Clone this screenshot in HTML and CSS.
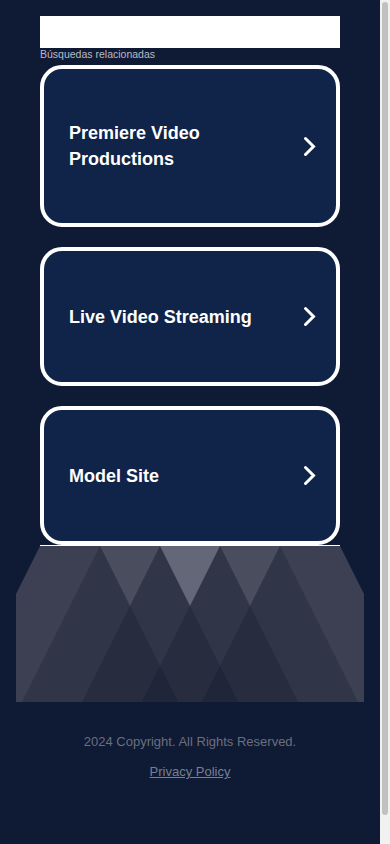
FILE: index.html
```html
<!DOCTYPE html>
<html lang="es">
<head>
<meta charset="utf-8">
<meta name="viewport" content="width=device-width, initial-scale=1">
<title>Búsquedas relacionadas</title>
<link rel="stylesheet" href="styles.css">
</head>
<body>
<div class="page">
  <div class="wrap">
    <div class="topbar"></div>
    <div class="heading">Búsquedas relacionadas</div>
    <div class="cards">
      <a class="card" href="#">
        <span class="card-text">Premiere Video Productions</span>
        <svg class="chev" width="16" height="29" viewBox="0 0 16 29"><path d="M3.5 6.5 L11.5 14.5 L3.5 22.5" fill="none" stroke="#fff" stroke-width="3" stroke-linecap="round" stroke-linejoin="miter"/></svg>
      </a>
      <a class="card" href="#">
        <span class="card-text">Live Video Streaming</span>
        <svg class="chev" width="16" height="29" viewBox="0 0 16 29"><path d="M3.5 6.5 L11.5 14.5 L3.5 22.5" fill="none" stroke="#fff" stroke-width="3" stroke-linecap="round" stroke-linejoin="miter"/></svg>
      </a>
      <a class="card" href="#">
        <span class="card-text">Model Site</span>
        <svg class="chev" width="16" height="29" viewBox="0 0 16 29"><path d="M3.5 6.5 L11.5 14.5 L3.5 22.5" fill="none" stroke="#fff" stroke-width="3" stroke-linecap="round" stroke-linejoin="miter"/></svg>
      </a>
    </div>
    <div class="rule"></div>
  </div>
  <div class="hero">
    <svg width="348" height="156" viewBox="0 0 348 156">
      <defs>
        <clipPath id="shape">
          <polygon points="24,0 324,0 348,48 348,156 0,156 0,48"/>
        </clipPath>
      </defs>
      <g clip-path="url(#shape)">
        <rect x="0" y="0" width="348" height="156" fill="#3c4052"/>
        <polygon points="84,0 144,0 114,60" fill="#4a4d5e"/>
        <polygon points="144,0 204,0 174,60" fill="#646778"/>
        <polygon points="204,0 264,0 234,60" fill="#4a4d5e"/>
        <polygon points="84,0 162,156 6,156" fill="rgba(12,18,40,0.25)"/>
        <polygon points="144,0 222,156 66,156" fill="rgba(12,18,40,0.25)"/>
        <polygon points="204,0 282,156 126,156" fill="rgba(12,18,40,0.25)"/>
        <polygon points="264,0 342,156 186,156" fill="rgba(12,18,40,0.25)"/>
      </g>
    </svg>
  </div>
  <footer class="footer">
    <p class="copy">2024 Copyright. All Rights Reserved.</p>
    <a class="privacy" href="#">Privacy Policy</a>
  </footer>
</div>
<div class="scrollbar"><div class="thumb"></div></div>
</body>
</html>
```
FILE: styles.css
```css
html {
  background: #0f1a35;
}
body {
  margin: 0;
  background: #0f1a35;
  font-family: "Liberation Sans", Arial, sans-serif;
}
.page {
  width: 380px;
}
.wrap {
  width: 300px;
  margin: 0 auto;
  padding-top: 16px;
}
.topbar {
  height: 32px;
  background: #fff;
}
.heading {
  font-size: 10.5px;
  line-height: 12px;
  color: #b9bcc4;
  margin-bottom: 5px;
}
.cards {
  display: flex;
  flex-direction: column;
  gap: 20px;
}
.card {
  display: flex;
  align-items: center;
  gap: 10px;
  padding: 51px 18px 51px 25px;
  border: 4px solid #fff;
  border-radius: 22px;
  background: #10244a;
  text-decoration: none;
}
.card-text {
  flex: 1;
  font-size: 18px;
  line-height: 26px;
  font-weight: bold;
  color: #fff;
}
.chev {
  display: block;
  flex: none;
}
.rule {
  height: 1px;
  background: #fff;
}
.hero {
  width: 348px;
  height: 156px;
  margin: 0 auto;
}
.hero svg {
  display: block;
}
.footer {
  display: flex;
  flex-direction: column;
  align-items: center;
  gap: 14px;
  padding: 32px 0 60px;
  font-size: 13px;
  line-height: 16px;
}
.copy {
  margin: 0;
  color: #6b6f7e;
}
.privacy {
  color: #7b7f8d;
  text-decoration: underline;
}
.scrollbar {
  position: fixed;
  top: 0;
  right: 0;
  bottom: 0;
  width: 10px;
  background: #f1f1f1;
}
.thumb {
  margin: 2px 2px 0;
  height: 813px;
  background: #c1c1c1;
  border-radius: 3px;
}
```
